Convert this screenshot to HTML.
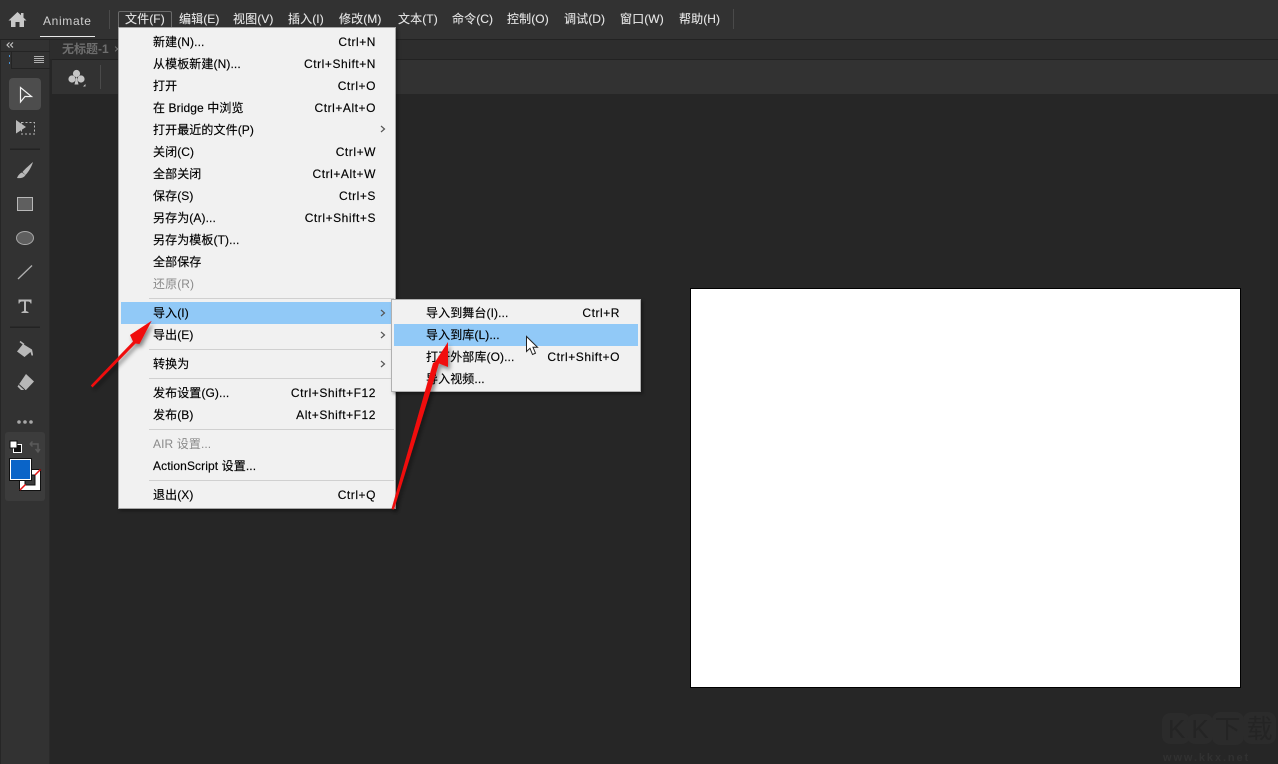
<!DOCTYPE html>
<html><head><meta charset="utf-8">
<style>
html,body{margin:0;padding:0;background:#262626;}
#p{position:relative;width:1278px;height:764px;overflow:hidden;background:#262626;font-family:"Liberation Sans","Noto Sans CJK SC",sans-serif;font-size:12px;}
.a{position:absolute;}
.t{position:absolute;white-space:nowrap;line-height:16px;height:16px;margin-top:1px;color:#000;letter-spacing:.1px;-webkit-text-stroke:.15px #000;}
.r{position:absolute;white-space:nowrap;line-height:16px;height:16px;margin-top:1px;color:#000;text-align:right;letter-spacing:.55px;-webkit-text-stroke:.15px #000;}
.m{position:absolute;white-space:nowrap;top:11px;line-height:16px;color:#e6e6e6;letter-spacing:.1px;-webkit-text-stroke:.1px #e6e6e6;}
.s{position:absolute;height:1px;background:#d0d0d0;}
.t.g{color:#8a8a8a;-webkit-text-stroke:0;}
</style></head><body><div id="p">

<!-- top bar -->
<div class="a" style="left:0;top:0;width:1278px;height:39px;background:#323232"></div>
<div class="a" style="left:0;top:39px;width:1278px;height:1px;background:#222"></div>
<div class="a" style="left:50px;top:40px;width:1228px;height:19px;background:#2d2d2d"></div>
<div class="a" style="left:52px;top:59px;width:1226px;height:1px;background:#222"></div>
<div class="a" style="left:52px;top:60px;width:1226px;height:34px;background:#323232"></div>

<svg class="a" style="left:8px;top:11px" width="19" height="17" viewBox="0 0 19 17"><path d="M9.5 1L0.5 9.5H3V16H7.5V11H11.5V16H16V9.5H18.5L15.5 6.6V2H13V4.3Z" fill="#c8c8c8"/></svg>
<div class="t" style="left:43px;top:12px;color:#d0d0d0;-webkit-text-stroke:0;letter-spacing:.65px">Animate</div>
<div class="a" style="left:40px;top:36px;width:55px;height:1px;background:#e8e8e8"></div>
<div class="a" style="left:109px;top:10px;width:1px;height:19px;background:#4a4a4a"></div>
<div class="a" style="left:118px;top:11px;width:52px;height:17px;border:1px solid #6a6a6a;border-bottom:0;border-radius:2px 2px 0 0"></div>

<div class="m" style="left:125px">文件(F)</div>
<div class="m" style="left:179px">编辑(E)</div>
<div class="m" style="left:233px">视图(V)</div>
<div class="m" style="left:288px">插入(I)</div>
<div class="m" style="left:339px">修改(M)</div>
<div class="m" style="left:398px">文本(T)</div>
<div class="m" style="left:452px">命令(C)</div>
<div class="m" style="left:507px">控制(O)</div>
<div class="m" style="left:564px">调试(D)</div>
<div class="m" style="left:620px">窗口(W)</div>
<div class="m" style="left:679px">帮助(H)</div>
<div class="a" style="left:733px;top:9px;width:1px;height:20px;background:#4a4a4a"></div>

<!-- tab and tool row -->
<div class="t" style="left:62px;top:40px;color:#6e6e6e;-webkit-text-stroke:0;font-weight:bold;letter-spacing:0">无标题-1</div>
<div class="t" style="left:114px;top:40px;color:#777;-webkit-text-stroke:0">×</div>
<svg class="a" style="left:67px;top:69px" width="20" height="19" viewBox="0 0 20 19"><circle cx="9.500" cy="4.500" r="3.600" fill="#c4c4c4"/><circle cx="5" cy="10" r="3.600" fill="#c4c4c4"/><circle cx="14" cy="10" r="3.600" fill="#c4c4c4"/><path d="M9.500 7L11.500 15.500H7.500Z" fill="#c4c4c4"/><path d="M16 17.500H18.500V15Z" fill="#c4c4c4"/></svg>
<div class="a" style="left:100px;top:65px;width:1px;height:24px;background:#4a4a4a"></div>

<!-- left panel -->
<div class="a" style="left:0;top:40px;width:50px;height:724px;background:#323232"></div>
<div class="a" style="left:0;top:40px;width:1px;height:724px;background:#262626"></div>
<div class="a" style="left:49px;top:40px;width:1px;height:724px;background:#2a2a2a"></div>
<div class="a" style="left:0;top:51px;width:50px;height:1px;background:#242424"></div>
<div class="a" style="left:11px;top:52px;width:1px;height:16px;background:#242424"></div>
<div class="a" style="left:11px;top:68px;width:39px;height:1px;background:#242424"></div>
<svg class="a" style="left:6px;top:42px" width="8" height="6" viewBox="0 0 8 6"><path d="M3.500 .5L1 3L3.500 5.500M7 .5L4.500 3L7 5.500" fill="none" stroke="#c8c8c8" stroke-width="1.100"/></svg>
<div class="a" style="left:9px;top:55px;width:1px;height:2px;background:#4a90d0"></div>
<div class="a" style="left:9px;top:62px;width:1px;height:2px;background:#4a90d0"></div>
<div class="a" style="left:34px;top:56px;width:10px;height:1px;background:#b0b0b0;box-shadow:0 2px 0 #b0b0b0,0 4px 0 #b0b0b0,0 6px 0 #b0b0b0"></div>

<div class="a" style="left:9px;top:78px;width:32px;height:32px;background:#4d4d4d;border-radius:4px"></div>
<svg class="a" style="left:0;top:70px" width="50" height="370" viewBox="0 0 50 370">
<path d="M20.500 17.500V32L25 26.500H31.500Z" fill="none" stroke="#f2f2f2" stroke-width="1.200"/>
<path d="M16 50V63.500L26 57Z" fill="#b8b8b8"/>
<rect x="21.500" y="52.500" width="13" height="11.500" fill="none" stroke="#b8b8b8" stroke-width="1" stroke-dasharray="2 2"/>
<rect x="10" y="78.500" width="30" height="1.500" fill="#232323"/>
<path d="M33 92C30 94.500 25 99 22.500 102L25.500 105C28.500 102 31.500 97 33 92Z" fill="#b8b8b8"/>
<path d="M22 102.500C19.500 103.500 18 105.500 17 108C20 108.500 24 108 25.500 105Z" fill="#b8b8b8"/>
<rect x="17.500" y="127.500" width="15" height="13" fill="#5f5f5f" stroke="#b8b8b8" stroke-width="1"/>
<ellipse cx="25" cy="168" rx="8.500" ry="6.500" fill="#5f5f5f" stroke="#a8a8a8" stroke-width="1"/>
<path d="M18 209L32 195.500" stroke="#b0b0b0" stroke-width="1.300"/>
<path d="M18.500 229.500H31.500V233.500H30.500C30.300 232 29.500 231.500 27.500 231.500H26V241L28.500 242V243H21.500V242L24 241V231.500H22.500C20.500 231.500 19.700 232 19.500 233.500H18.500Z" fill="#b8b8b8"/>
<rect x="10" y="256.500" width="30" height="1.500" fill="#232323"/>
<path d="M23 274L32 279.500C32.500 282 33 283.500 33 285.500H31.500L30.500 282L24.500 287L17 281.500Z" fill="#b8b8b8"/>
<path d="M20 271.500L24 274.500" stroke="#b8b8b8" stroke-width="1.500" fill="none"/>
<path d="M26 304L34 311.500L26 320H21L17.500 316.500Z" fill="#b8b8b8"/>
<path d="M19 314.500L25 320" stroke="#323232" stroke-width="1"/>
<circle cx="19" cy="352" r="1.800" fill="#a8a8a8"/><circle cx="25" cy="352" r="1.800" fill="#a8a8a8"/><circle cx="31" cy="352" r="1.800" fill="#a8a8a8"/>
</svg>

<div class="a" style="left:5px;top:432px;width:40px;height:69px;background:#3c3c3c;border-radius:3px"></div>
<svg class="a" style="left:5px;top:432px" width="40" height="69" viewBox="0 0 40 69">
<rect x="8.500" y="12.500" width="8" height="8" fill="#111" stroke="#fff" stroke-width="1"/>
<rect x="5" y="9" width="7" height="7" fill="#fff" stroke="#111" stroke-width="1"/>
<path d="M25 12H33V19M25 12L27.500 9.500M25 12L27.500 14.500M30.500 17L33 20L35 17" fill="none" stroke="#5a5a5a" stroke-width="1.500"/>
<rect x="14.500" y="37.500" width="21" height="21" fill="#fff" stroke="#111" stroke-width="1"/>
<rect x="20" y="43" width="10" height="10" fill="#3c3c3c" stroke="#111" stroke-width="1"/>
<path d="M30 43L35.500 37.500M15 58L20.500 52.500" stroke="#e81010" stroke-width="1.500"/>
</svg>
<div class="a" style="left:10px;top:459px;width:19px;height:19px;background:#0a64c8;border:1px solid #fff;outline:1px solid #111"></div>

<!-- canvas -->
<div class="a" style="left:690px;top:288px;width:549px;height:398px;background:#fff;border:1px solid #000"></div>

<!-- watermark -->
<div class="a" style="left:1162px;top:713px;width:28px;height:31px;background:#2b2b2b;border-radius:8px"></div>
<div class="a" style="left:1187px;top:714px;width:26px;height:30px;background:#2b2b2b;border-radius:8px"></div>
<div class="a" style="left:1212px;top:712px;width:32px;height:33px;background:#2b2b2b;border-radius:8px"></div>
<div class="a" style="left:1243px;top:712px;width:33px;height:32px;background:#2b2b2b;border-radius:8px"></div>
<div class="a" style="left:1168px;top:713px;color:#242424;font-size:26px;line-height:32px;white-space:nowrap;letter-spacing:6px">KK下载</div>
<div class="a" style="left:1163px;top:751px;color:#313131;font-size:11px;font-weight:bold;line-height:14px;white-space:nowrap;letter-spacing:1.900px">www.kkx.net</div>

<!-- file menu -->
<div class="a" style="left:118px;top:27px;width:276px;height:480px;background:#f1f1f1;border:1px solid #a6a6a6;box-shadow:2px 2px 3px rgba(0,0,0,.35)"></div>
<div class="a" style="left:121px;top:302px;width:273px;height:22px;background:#91c9f7"></div>
<div class="s" style="left:149px;top:298px;width:245px"></div>
<div class="s" style="left:149px;top:349px;width:245px"></div>
<div class="s" style="left:149px;top:378px;width:245px"></div>
<div class="s" style="left:149px;top:429px;width:245px"></div>
<div class="s" style="left:149px;top:480px;width:245px"></div>

<div class="t" style="left:153px;top:33px">新建(N)...</div><div class="r" style="right:902px;top:33px">Ctrl+N</div>
<div class="t" style="left:153px;top:55px">从模板新建(N)...</div><div class="r" style="right:902px;top:55px">Ctrl+Shift+N</div>
<div class="t" style="left:153px;top:77px">打开</div><div class="r" style="right:902px;top:77px">Ctrl+O</div>
<div class="t" style="left:153px;top:99px">在 Bridge 中浏览</div><div class="r" style="right:902px;top:99px">Ctrl+Alt+O</div>
<div class="t" style="left:153px;top:121px">打开最近的文件(P)</div>
<div class="t" style="left:153px;top:143px">关闭(C)</div><div class="r" style="right:902px;top:143px">Ctrl+W</div>
<div class="t" style="left:153px;top:165px">全部关闭</div><div class="r" style="right:902px;top:165px">Ctrl+Alt+W</div>
<div class="t" style="left:153px;top:187px">保存(S)</div><div class="r" style="right:902px;top:187px">Ctrl+S</div>
<div class="t" style="left:153px;top:209px">另存为(A)...</div><div class="r" style="right:902px;top:209px">Ctrl+Shift+S</div>
<div class="t" style="left:153px;top:231px">另存为模板(T)...</div>
<div class="t" style="left:153px;top:253px">全部保存</div>
<div class="t g" style="left:153px;top:275px">还原(R)</div>
<div class="t" style="left:153px;top:304px">导入(I)</div>
<div class="t" style="left:153px;top:326px">导出(E)</div>
<div class="t" style="left:153px;top:355px">转换为</div>
<div class="t" style="left:153px;top:384px">发布设置(G)...</div><div class="r" style="right:902px;top:384px">Ctrl+Shift+F12</div>
<div class="t" style="left:153px;top:406px">发布(B)</div><div class="r" style="right:902px;top:406px">Alt+Shift+F12</div>
<div class="t g" style="left:153px;top:435px">AIR 设置...</div>
<div class="t" style="left:153px;top:457px">ActionScript 设置...</div>
<div class="t" style="left:153px;top:486px">退出(X)</div><div class="r" style="right:902px;top:486px">Ctrl+Q</div>

<svg class="a" style="left:378px;top:120px" width="10" height="260" viewBox="0 0 10 260"><path d="M3 6L6.500 9L3 12M3 190L6.500 193L3 196M3 212L6.500 215L3 218M3 241L6.500 244L3 247" fill="none" stroke="#555" stroke-width="1.200"/></svg>

<!-- submenu -->
<div class="a" style="left:391px;top:299px;width:248px;height:91px;background:#f1f1f1;border:1px solid #b0b0b0;box-shadow:2px 2px 3px rgba(0,0,0,.35)"></div>
<div class="a" style="left:394px;top:324px;width:244px;height:22px;background:#91c9f7"></div>
<div class="t" style="left:426px;top:304px">导入到舞台(I)...</div><div class="r" style="right:658px;top:304px">Ctrl+R</div>
<div class="t" style="left:426px;top:326px">导入到库(L)...</div>
<div class="t" style="left:426px;top:348px">打开外部库(O)...</div><div class="r" style="right:658px;top:348px">Ctrl+Shift+O</div>
<div class="t" style="left:426px;top:370px">导入视频...</div>

<!-- cursor -->
<svg class="a" style="left:525px;top:335px" width="16" height="22" viewBox="0 0 16 22"><path d="M1.500 1.500V16.500L5 13.300L7.500 19.500L10.500 18.200L8 12.300H12.500Z" fill="#fff" stroke="#222" stroke-width="1"/></svg>

<!-- arrows -->
<svg class="a" style="left:0;top:0" width="1278" height="764" viewBox="0 0 1278 764">
<defs><filter id="f" x="-30%" y="-30%" width="160%" height="160%"><feDropShadow dx="2" dy="3" stdDeviation="2" flood-color="#000" flood-opacity=".45"/></filter></defs>
<g filter="url(#f)" fill="#f00a0a">
<path d="M90.800 385.500L133 341.500L130 335L151.700 320.700L139.500 344L135.500 343.500L92.500 387.500Z"/>
<path d="M391.500 509L433 363L435 362L448 342L448 367L439 363.500L394 509.500Z"/>
</g>
</svg>

</div></body></html>
